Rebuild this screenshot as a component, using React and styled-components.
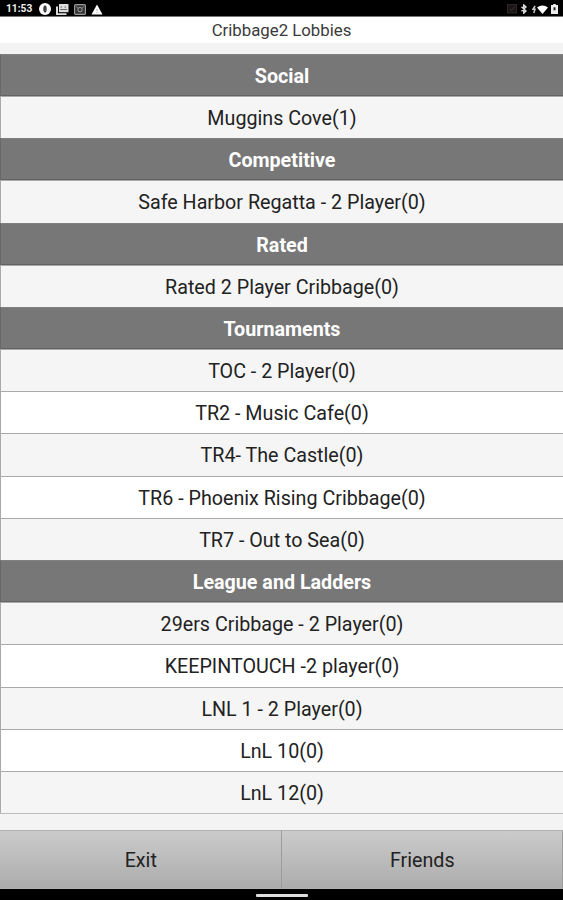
import React from 'react';
import styled, { createGlobalStyle } from 'styled-components';

const GlobalStyle = createGlobalStyle`
  body {
    margin: 0;
    font-family: Roboto, "Liberation Sans", sans-serif;
  }
`;

const Screen = styled.div`
  display: flex;
  flex-direction: column;
  width: 563px;
  height: 900px;
  overflow: hidden;
  background-color: #f3f3f3;
`;

const StatusBar = styled.div`
  display: flex;
  align-items: center;
  justify-content: space-between;
  box-sizing: border-box;
  height: 16px;
  flex: none;
  padding: 2px 5px 0 6px;
  background-color: #000;
`;

const StatusGroup = styled.div`
  display: flex;
  align-items: center;
`;

const Clock = styled.span`
  width: 33px;
  color: #eee;
  font-size: 10.2px;
  font-weight: 700;
  line-height: 14px;
`;

const StatusIcon = styled.svg`
  display: block;
  flex: none;
  margin-left: ${(props) => props.$gap || 0}px;
`;

const TitleBar = styled.div`
  box-sizing: border-box;
  height: 27px;
  flex: none;
  border-top: 1px solid #777;
  background-color: #fff;
  color: #3a3a3a;
  font-size: 16.8px;
  line-height: 27px;
  text-align: center;
`;

const LobbyList = styled.div`
  flex: none;
  margin-top: 10.8px;
  border-bottom: 1px solid #bbb;
`;

const Row = styled.div`
  box-sizing: border-box;
  height: 42.2px;
  border-top: 1px solid #aaa;
  border-left: 1px solid #aaa;
  background-color: ${(props) => (props.$white ? '#fff' : '#f5f5f5')};
  color: #222;
  font-size: 19.7px;
  line-height: 43px;
  text-align: center;
`;

const SectionRow = styled(Row)`
  border-top-color: #808080;
  border-bottom: 1px solid #636363;
  border-left-color: #686868;
  background-color: #777;
  color: #fff;
  font-weight: 700;
`;

const ButtonBar = styled.div`
  display: flex;
  flex: none;
  height: 59px;
  margin-top: auto;
`;

const BarButton = styled.button`
  flex: 1;
  padding: 2px 0 0 1px;
  border: 1px solid #b0b0b0;
  border-width: 1px 1px 1px 0;
  border-right-color: #9c9c9c;
  background: linear-gradient(#cbcbcb, #acacac);
  color: #222;
  font-family: inherit;
  font-size: 19.7px;
`;

const NavBar = styled.div`
  display: flex;
  justify-content: center;
  box-sizing: border-box;
  height: 11px;
  flex: none;
  padding-top: 5px;
  background-color: #000;
`;

const NavHandle = styled.div`
  width: 52px;
  height: 3px;
  border-radius: 1px;
  background-color: #dedede;
`;

const sections = [
  { name: 'Social', lobbies: ['Muggins Cove(1)'] },
  { name: 'Competitive', lobbies: ['Safe Harbor Regatta - 2 Player(0)'] },
  { name: 'Rated', lobbies: ['Rated 2 Player Cribbage(0)'] },
  {
    name: 'Tournaments',
    lobbies: [
      'TOC - 2 Player(0)',
      'TR2 - Music Cafe(0)',
      'TR4- The Castle(0)',
      'TR6 - Phoenix Rising Cribbage(0)',
      'TR7 - Out to Sea(0)',
    ],
  },
  {
    name: 'League and Ladders',
    lobbies: [
      '29ers Cribbage - 2 Player(0)',
      'KEEPINTOUCH -2 player(0)',
      'LNL 1 - 2 Player(0)',
      'LnL 10(0)',
      'LnL 12(0)',
    ],
  },
];

const Notifications = () => (
  <StatusGroup>
    <Clock>11:53</Clock>
    <StatusIcon width="12" height="12" viewBox="0 0 12 12">
      <circle cx="6" cy="6" r="6" fill="#fff" />
      <ellipse cx="6" cy="6" rx="1.6" ry="3.4" fill="#111" />
      <path d="M6 3.4v5.2" stroke="#aaa" strokeWidth="0.7" />
    </StatusIcon>
    <StatusIcon $gap={5} width="13" height="11" viewBox="0 0 13 11">
      <path d="M3 0h9.5v8.2H3z" fill="#ddd" />
      <path d="M1 2.5v7.7h9.5" stroke="#ddd" strokeWidth="2" fill="none" />
      <path d="M4.5 2.4h1.6v1H4.5zM8.5 2.4h1.6v1H8.5zM4.2 5h7v0.9h-7z" fill="#666" />
    </StatusIcon>
    <StatusIcon $gap={5} width="12" height="11" viewBox="0 0 12 11">
      <rect x="0.6" y="0.6" width="10.8" height="9.8" rx="1" fill="#333" stroke="#999" strokeWidth="1.2" />
      <circle cx="6" cy="5.7" r="2.2" fill="none" stroke="#aaa" />
      <path d="M2 2.5l2 1.5M10 2.5L8 4" stroke="#888" />
    </StatusIcon>
    <StatusIcon $gap={5} width="12" height="11" viewBox="0 0 12 11">
      <path d="M6 0.5L11.5 10.5H0.5z" fill="#fff" />
      <path d="M6 5v1.8M6 8v1" stroke="#aaa" />
    </StatusIcon>
  </StatusGroup>
);

const SystemIcons = () => (
  <StatusGroup>
    <StatusIcon width="10" height="10" viewBox="0 0 10 10">
      <rect x="0.5" y="0.5" width="9" height="8.5" fill="#1c1717" stroke="#2c2626" />
      <path d="M3 5l1.5 1.5L7.5 3" stroke="#3c3434" fill="none" />
    </StatusIcon>
    <StatusIcon $gap={4} width="6" height="10" viewBox="0 0 6 10">
      <path d="M0.5 2.8L5 7 2.8 9V1L5 3 0.5 7.2" stroke="#ddd" strokeWidth="1.5" fill="none" />
    </StatusIcon>
    <StatusIcon $gap={5} width="4" height="9" viewBox="0 0 4 9">
      <path d="M3.2 1L1 4.2h2L1.8 8" stroke="#ccc" strokeWidth="1.5" fill="none" />
    </StatusIcon>
    <StatusIcon $gap={1} width="11" height="9" viewBox="0 0 11 9">
      <path d="M0 2.5Q5.5-1.6 11 2.5L5.5 9z" fill="#fff" />
    </StatusIcon>
    <StatusIcon $gap={3} width="7" height="10" viewBox="0 0 7 10">
      <path d="M2.2 0h2.6v1H7v9H0V1h2.2z" fill="#eee" />
      <path d="M2.5 3.3h2v3h-2z" fill="#222" />
    </StatusIcon>
  </StatusGroup>
);

const App = () => {
  return (
    <Screen>
      <GlobalStyle />
      <StatusBar>
        <Notifications />
        <SystemIcons />
      </StatusBar>
      <TitleBar>Cribbage2 Lobbies</TitleBar>
      <LobbyList>
        {sections.map((section) => (
          <React.Fragment key={section.name}>
            <SectionRow>{section.name}</SectionRow>
            {section.lobbies.map((lobby, index) => (
              <Row key={lobby} $white={index % 2 === 1}>
                {lobby}
              </Row>
            ))}
          </React.Fragment>
        ))}
      </LobbyList>
      <ButtonBar>
        <BarButton>Exit</BarButton>
        <BarButton>Friends</BarButton>
      </ButtonBar>
      <NavBar>
        <NavHandle />
      </NavBar>
    </Screen>
  );
};

export default App;
